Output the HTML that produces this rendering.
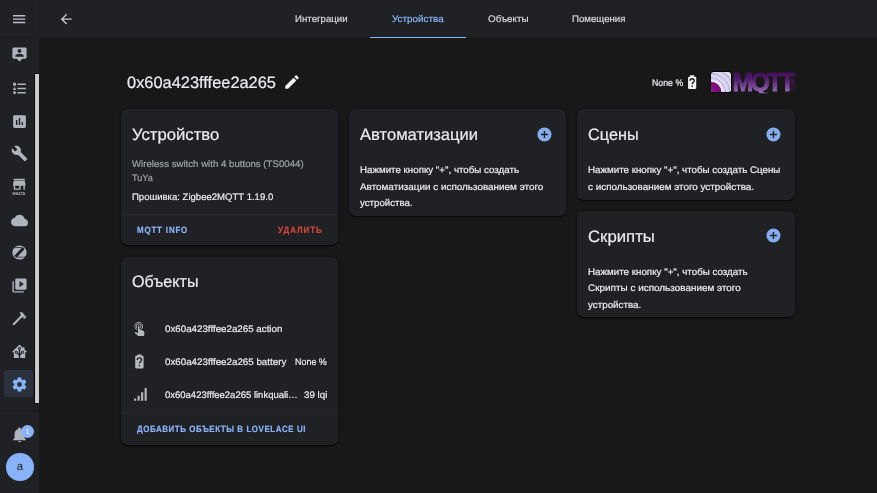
<!DOCTYPE html>
<html lang="ru">
<head>
<meta charset="utf-8">
<title>Home Assistant</title>
<style>
html,body{margin:0;padding:0;background:#181818;}
body{width:877px;height:493px;position:relative;overflow:hidden;font-family:"Liberation Sans", sans-serif;}
#app{position:absolute;left:0;top:0;width:877px;height:493px;will-change:transform;}
.t,.ic,.card,.ln,.hacs,#sel,#thumb,#thumb i,#uline,#badge,#avatar,#sidebar,#header,#main{position:absolute;}
.t{margin:0;padding:0;white-space:nowrap;line-height:1;font-weight:normal;transform-origin:0 50%;display:block;-webkit-text-stroke:0.22px currentColor;}
.btn{font-weight:bold;}
.ic{display:block;overflow:visible;}
#sidebar{left:0;top:0;width:38.6px;height:493px;background:#202124;}
#header{left:38.6px;top:0;width:838.4px;height:37.8px;background:#202124;}
#main{left:38.6px;top:37.8px;width:838.4px;height:455.2px;}
.card{background:#202124;border-radius:6.5px;box-shadow:0 1.4px 1px -1px rgba(0,0,0,.35),0 1px 1px rgba(0,0,0,.25),0 1px 2.5px rgba(0,0,0,.3),0 0 2.5px rgba(0,0,0,.3);}
.ln{height:1px;background:#26272A;}
.hacs{font-size:4.3px;font-weight:bold;color:#C9CDD3;line-height:1;letter-spacing:.15px;width:14px;text-align:center;transform:skewX(0.05deg);}
#sel{left:4.3px;top:370px;width:29px;height:26.8px;border-radius:3px;background:#2B313D;}
#thumb{left:33.9px;top:73.2px;width:5.6px;height:330.4px;background:#0C0C0E;}
#thumb i{left:0.8px;top:0.8px;right:0.8px;bottom:0.8px;background:linear-gradient(90deg,#B9B9B9,#D4D4D4 45%,#C2C2C2);}
#uline{top:36.6px;width:96.2px;height:1.9px;background:#89B3F8;}
#badge{left:21.1px;top:424.6px;width:13.2px;height:13.2px;border-radius:50%;background:#89B3F8;color:#F2F5FA;font-size:7.5px;line-height:13.2px;text-align:center;transform:skewX(0.05deg);}
#avatar{left:5.5px;top:452.9px;width:27.7px;height:27.7px;border-radius:50%;background:#89B3F8;color:#202124;font-size:11.5px;line-height:27.6px;text-align:center;transform:skewX(0.05deg);}
</style>
</head>
<body>
<div id="app">
<main id="main">
<h1 class="t" id="t4" style="left:88px;top:36.2px;font-size:16.5px;color:#E8EAED;transform:skewX(0.05deg) scaleX(0.9940)">0x60a423fffee2a265</h1>
<svg class="ic" style="left:244.6px;top:35.2px;width:18px;height:18px" viewBox="0 0 24 24"><path fill="#F0F1F3" d="M20.71,7.04C21.1,6.65 21.1,6 20.71,5.63L18.37,3.29C18,2.9 17.35,2.9 16.96,3.29L15.12,5.12L18.87,8.87M3,17.25V21H6.75L17.81,9.93L14.06,6.18L3,17.25Z"/></svg>
<span class="t" id="t5" style="left:613px;top:40.2px;font-size:9.5px;color:#E8EAED;transform:skewX(0.05deg) scaleX(0.9225)">None %</span>
<svg class="ic" style="left:645.35px;top:36.15px;width:16.3px;height:16.3px" viewBox="0 0 24 24"><path fill="#F0F1F3" d="M15.07,12.25L14.17,13.17C13.63,13.71 13.25,14.18 13.09,15H11.05C11.16,14.1 11.56,13.28 12.17,12.67L13.41,11.41C13.78,11.05 14,10.55 14,10C14,8.89 13.1,8 12,8A2,2 0 0,0 10,10H8A4,4 0 0,1 12,6A4,4 0 0,1 16,10C16,10.88 15.64,11.67 15.07,12.25M13,19H11V17H13M16.67,4H15V2H9V4H7.33C6.6,4 6,4.6 6,5.33V20.67C6,21.4 6.6,22 7.33,22H16.67C17.4,22 18,21.4 18,20.67V5.33C18,4.6 17.4,4 16.67,4Z"/></svg>
<svg class="ic" style="left:670.4px;top:32.2px;width:90px;height:26px" viewBox="0 0 90 26">
<defs>
<radialGradient id="gsq" gradientUnits="userSpaceOnUse" cx="2" cy="22.2" r="28">
<stop offset="0.37" stop-color="#F3F2FA"/><stop offset="0.41" stop-color="#ECEAF6"/>
<stop offset="0.505" stop-color="#C6C2E6"/><stop offset="0.52" stop-color="#9F9AD3"/><stop offset="0.535" stop-color="#E6E4F4"/>
<stop offset="0.665" stop-color="#C6C2E6"/><stop offset="0.68" stop-color="#9F9AD3"/><stop offset="0.695" stop-color="#E6E4F4"/>
<stop offset="0.825" stop-color="#C6C2E6"/><stop offset="0.84" stop-color="#9F9AD3"/><stop offset="0.855" stop-color="#E6E4F4"/>
<stop offset="1" stop-color="#CFCBEA"/>
</radialGradient>
<linearGradient id="gq" x1="0" y1="1" x2="1" y2="0"><stop offset="0" stop-color="#B455B4"/><stop offset="0.7" stop-color="#7C0C7C"/></linearGradient>
<linearGradient id="gt" gradientUnits="userSpaceOnUse" x1="0" y1="3" x2="0" y2="22"><stop offset="0" stop-color="#43105A"/><stop offset="0.3" stop-color="#4F1B68"/><stop offset="1" stop-color="#9566B4"/></linearGradient>
<clipPath id="ctx"><rect x="20" y="0" width="70" height="23.3"/></clipPath>
<clipPath id="csq"><rect x="2" y="2" width="20" height="20" rx="2.6"/></clipPath>
</defs>
<rect x="1.1" y="1.1" width="21.8" height="21.8" rx="3.4" fill="#060608"/>
<rect x="2" y="2" width="20" height="20" rx="2.6" fill="url(#gsq)"/>
<g clip-path="url(#csq)">
<circle cx="2" cy="22.2" r="10.4" fill="url(#gq)"/>
</g>
<text clip-path="url(#ctx)" x="23.6" y="20.9" font-family="Liberation Sans, sans-serif" font-weight="bold" font-size="25" fill="url(#gt)" stroke="url(#gt)" stroke-width="0.9" textLength="62.4" lengthAdjust="spacing">MQTT</text>
<text transform="translate(82,5.8) rotate(90)" font-family="Liberation Sans, sans-serif" font-weight="bold" font-size="5" fill="#4A1761" textLength="14.6" lengthAdjust="spacingAndGlyphs">.ORG</text>
</svg>
<section class="card" style="left:82.1px;top:71.6px;width:217.3px;height:135.9px;">
<h2 class="t" id="t6" style="left:11.3px;top:16.6px;font-size:16.5px;color:#E8EAED;transform:skewX(0.05deg) scaleX(1.0111)">Устройство</h2>
<span class="t" id="t7" style="left:11.3px;top:49.6px;font-size:9.5px;color:#9BA0A6;transform:skewX(0.05deg) scaleX(1.0156)">Wireless switch with 4 buttons (TS0044)</span>
<span class="t" id="t8" style="left:11.3px;top:63.6px;font-size:9.5px;color:#9BA0A6;transform:skewX(0.05deg) scaleX(0.9601)">TuYa</span>
<span class="t" id="t9" style="left:11.3px;top:82.6px;font-size:9.5px;color:#E8EAED;transform:skewX(0.05deg) scaleX(1.0055)">Прошивка: Zigbee2MQTT 1.19.0</span>
<div class="ln" style="left:0;top:104.3px;width:217.3px"></div>
<span class="t btn" id="t10" style="left:16.5px;top:116.6px;font-size:9px;color:#89B3F8;letter-spacing:0.956px;transform:skewX(0.05deg) scaleX(0.88)">MQTT INFO</span>
<span class="t btn" id="t11" style="left:157px;top:116.6px;font-size:9px;color:#D0453A;letter-spacing:1.140px;transform:skewX(0.05deg) scaleX(0.88)">УДАЛИТЬ</span>
</section>
<section class="card" style="left:310.5px;top:71.6px;width:217.3px;height:106.7px;">
<h2 class="t" id="t12" style="left:11.3px;top:16.6px;font-size:16.5px;color:#E8EAED;transform:skewX(0.05deg) scaleX(1.0048)">Автоматизации</h2>
<svg class="ic" style="left:187.05px;top:16.35px;width:16.9px;height:16.9px" viewBox="0 0 24 24"><path fill="#85ACEC" d="M17,13H13V17H11V13H7V11H11V7H13V11H17M12,2A10,10 0 0,0 2,12A10,10 0 0,0 12,22A10,10 0 0,0 22,12A10,10 0 0,0 12,2Z"/></svg>
<span class="t" id="t13" style="left:11.3px;top:55.6px;font-size:9.5px;color:#E8EAED;transform:skewX(0.05deg) scaleX(1.0254)">Нажмите кнопку "+", чтобы создать</span>
<span class="t" id="t14" style="left:11.3px;top:72.6px;font-size:9.5px;color:#E8EAED;transform:skewX(0.05deg) scaleX(1.0418)">Автоматизации с использованием этого</span>
<span class="t" id="t15" style="left:11.3px;top:88.6px;font-size:9.5px;color:#E8EAED;transform:skewX(0.05deg) scaleX(1.0193)">устройства.</span>
</section>
<section class="card" style="left:538.9px;top:71.6px;width:217.6px;height:90.2px;">
<h2 class="t" id="t16" style="left:10.6px;top:16.6px;font-size:16.5px;color:#E8EAED;transform:skewX(0.05deg) scaleX(0.9872)">Сцены</h2>
<svg class="ic" style="left:187.05px;top:16.35px;width:16.9px;height:16.9px" viewBox="0 0 24 24"><path fill="#85ACEC" d="M17,13H13V17H11V13H7V11H11V7H13V11H17M12,2A10,10 0 0,0 2,12A10,10 0 0,0 12,22A10,10 0 0,0 22,12A10,10 0 0,0 12,2Z"/></svg>
<span class="t" id="t17" style="left:10.6px;top:55.6px;font-size:9.5px;color:#E8EAED;transform:skewX(0.05deg) scaleX(1.0275)">Нажмите кнопку "+", чтобы создать Сцены</span>
<span class="t" id="t18" style="left:10.6px;top:72.6px;font-size:9.5px;color:#E8EAED;transform:skewX(0.05deg) scaleX(1.0390)">с использованием этого устройства.</span>
</section>
<section class="card" style="left:538.9px;top:173.2px;width:217.6px;height:106.4px;">
<h2 class="t" id="t19" style="left:10.6px;top:17px;font-size:16.5px;color:#E8EAED;transform:skewX(0.05deg) scaleX(1.0151)">Скрипты</h2>
<svg class="ic" style="left:187.05px;top:16.25px;width:16.9px;height:16.9px" viewBox="0 0 24 24"><path fill="#85ACEC" d="M17,13H13V17H11V13H7V11H11V7H13V11H17M12,2A10,10 0 0,0 2,12A10,10 0 0,0 12,22A10,10 0 0,0 22,12A10,10 0 0,0 12,2Z"/></svg>
<span class="t" id="t20" style="left:10.6px;top:56px;font-size:9.5px;color:#E8EAED;transform:skewX(0.05deg) scaleX(1.0293)">Нажмите кнопку "+", чтобы создать</span>
<span class="t" id="t21" style="left:10.6px;top:72px;font-size:9.5px;color:#E8EAED;transform:skewX(0.05deg) scaleX(1.0451)">Скрипты с использованием этого</span>
<span class="t" id="t22" style="left:10.6px;top:89px;font-size:9.5px;color:#E8EAED;transform:skewX(0.05deg) scaleX(1.0329)">устройства.</span>
</section>
<section class="card" style="left:82.1px;top:219.5px;width:217.3px;height:187.3px;">
<h2 class="t" id="t23" style="left:11.3px;top:15.7px;font-size:16.5px;color:#E8EAED;transform:skewX(0.05deg) scaleX(0.9771)">Объекты</h2>
<svg class="ic" style="left:10.3px;top:63px;width:16.8px;height:16.8px" viewBox="0 0 24 24"><path fill="#B6B9BE" d="M10,9A1,1 0 0,1 11,8A1,1 0 0,1 12,9V13.47L13.21,13.6L18.15,15.79C18.68,16.03 19,16.56 19,17.14V21.5C18.97,22.32 18.32,22.97 17.5,23H11C10.62,23 10.26,22.85 10,22.57L5.1,18.37L5.84,17.6C6.03,17.39 6.3,17.28 6.58,17.28H6.8L10,19V9M11,5A4,4 0 0,1 15,9C15,10.5 14.2,11.77 13,12.46V11.24C13.61,10.69 14,9.89 14,9A3,3 0 0,0 11,6A3,3 0 0,0 8,9C8,9.89 8.39,10.69 9,11.24V12.46C7.8,11.77 7,10.5 7,9A4,4 0 0,1 11,5M11,3A6,6 0 0,1 17,9C17,10.7 16.29,12.23 15.16,13.33L14.16,12.88C15.28,11.96 16,10.56 16,9A5,5 0 0,0 11,4A5,5 0 0,0 6,9C6,11.05 7.23,12.81 9,13.58V14.66C6.67,13.83 5,11.61 5,9A6,6 0 0,1 11,3Z"/></svg>
<span class="t" id="t24" style="left:44.1px;top:66.7px;font-size:9.5px;color:#E8EAED;transform:skewX(0.05deg) scaleX(1.0271)">0x60a423fffee2a265 action</span>
<svg class="ic" style="left:10.6px;top:96.1px;width:16.8px;height:16.8px" viewBox="0 0 24 24"><path fill="#B6B9BE" d="M15.07,12.25L14.17,13.17C13.63,13.71 13.25,14.18 13.09,15H11.05C11.16,14.1 11.56,13.28 12.17,12.67L13.41,11.41C13.78,11.05 14,10.55 14,10C14,8.89 13.1,8 12,8A2,2 0 0,0 10,10H8A4,4 0 0,1 12,6A4,4 0 0,1 16,10C16,10.88 15.64,11.67 15.07,12.25M13,19H11V17H13M16.67,4H15V2H9V4H7.33C6.6,4 6,4.6 6,5.33V20.67C6,21.4 6.6,22 7.33,22H16.67C17.4,22 18,21.4 18,20.67V5.33C18,4.6 17.4,4 16.67,4Z"/></svg>
<span class="t" id="t25" style="left:44.1px;top:99.7px;font-size:9.5px;color:#E8EAED;transform:skewX(0.05deg) scaleX(1.0280)">0x60a423fffee2a265 battery</span>
<span class="t" id="t26" style="left:174.5px;top:99.7px;font-size:9.5px;color:#E8EAED;transform:skewX(0.05deg) scaleX(0.9402)">None %</span>
<svg class="ic" style="left:10.9px;top:128.8px;width:16.8px;height:16.8px" viewBox="0 0 24 24"><path fill="#B6B9BE" d="M3,21H6V18H3M8,21H11V14H8M13,21H16V9H13M18,21H21V3H18V21Z"/></svg>
<span class="t" id="t27" style="left:44.1px;top:132.7px;font-size:9.5px;color:#E8EAED;transform:skewX(0.05deg) scaleX(0.9994)">0x60a423fffee2a265 linkquali…</span>
<span class="t" id="t28" style="left:182.9px;top:132.7px;font-size:9.5px;color:#E8EAED;transform:skewX(0.05deg) scaleX(1.0296)">39 lqi</span>
<div class="ln" style="left:0;top:155px;width:217.3px"></div>
<span class="t btn" id="t29" style="left:16.5px;top:167.7px;font-size:9px;color:#89B3F8;letter-spacing:0.651px;transform:skewX(0.05deg) scaleX(0.88)">ДОБАВИТЬ ОБЪЕКТЫ В LOVELACE UI</span>
</section>
</main>
<header id="header">
<svg class="ic" style="left:19.05px;top:11.15px;width:16.3px;height:16.3px" viewBox="0 0 24 24"><path fill="#C3C7CE" d="M20,11V13H8L13.5,18.5L12.08,19.92L4.16,12L12.08,4.08L13.5,5.5L8,11H20Z"/></svg>
<span class="t tab" id="t0" style="left:256.5px;top:14px;font-size:9.5px;color:#D3D5D9;transform:skewX(0.05deg) scaleX(1.0191)">Интеграции</span>
<span class="t tab" id="t1" style="left:353.6px;top:14px;font-size:9.5px;color:#89B3F8;transform:skewX(0.05deg) scaleX(1.0400)">Устройства</span>
<span class="t tab" id="t2" style="left:449px;top:14px;font-size:9.5px;color:#D3D5D9;transform:skewX(0.05deg) scaleX(1.0358)">Объекты</span>
<span class="t tab" id="t3" style="left:533.5px;top:14px;font-size:9.5px;color:#D3D5D9;transform:skewX(0.05deg) scaleX(1.0165)">Помещения</span>
<div id="uline" style="left:331.4px"></div>
</header>
<nav id="sidebar">
<div class="ln" style="left:0;top:37.4px;width:38.6px;background:#1B1C1F"></div>
<div class="ln" style="left:38px;top:0;width:0.8px;height:37.8px;background:#1C1D20"></div>
<div id="sel"></div>
<svg class="ic" style="left:11.15px;top:11.05px;width:16.3px;height:16.3px" viewBox="0 0 24 24"><path fill="#BCC0C8" d="M3,6H21V8H3V6M3,11H21V13H3V11M3,16H21V18H3V16Z"/></svg>
<svg class="ic" style="left:10.8px;top:46.4px;width:17px;height:17px" viewBox="0 0 24 24"><path fill="#AEB3BC" d="M20,2H4A2,2 0 0,0 2,4V16A2,2 0 0,0 4,18H8L12,22L16,18H20A2,2 0 0,0 22,16V4A2,2 0 0,0 20,2M12,4.3C13.5,4.3 14.7,5.5 14.7,7C14.7,8.5 13.5,9.7 12,9.7C10.5,9.7 9.3,8.5 9.3,7C9.3,5.5 10.5,4.3 12,4.3M18,15H6V14.1C6,12.1 10,11 12,11C14,11 18,12.1 18,14.1V15Z"/></svg>
<svg class="ic" style="left:10.8px;top:79.6px;width:17px;height:17px" viewBox="0 0 24 24"><path fill="#AEB3BC" d="M5,9.5L7.5,14H2.5L5,9.5M3,4H7V8H3V4M5,20A2,2 0 0,0 7,18A2,2 0 0,0 5,16A2,2 0 0,0 3,18A2,2 0 0,0 5,20M9,5V7H21V5H9M9,19H21V17H9V19M9,13H21V11H9V13Z"/></svg>
<svg class="ic" style="left:10.8px;top:112.7px;width:17px;height:17px" viewBox="0 0 24 24"><path fill="#AEB3BC" d="M17,17H15V13H17M13,17H11V7H13M9,17H7V10H9M19,3H5C3.89,3 3,3.89 3,5V19A2,2 0 0,0 5,21H19A2,2 0 0,0 21,19V5C21,3.89 20.1,3 19,3Z"/></svg>
<svg class="ic" style="left:10.8px;top:145.2px;width:17px;height:17px" viewBox="0 0 24 24"><path fill="#AEB3BC" d="M22.7,19L13.6,9.9C14.5,7.6 14,4.9 12.1,3C10.1,1 7.1,0.6 4.7,1.7L9,6L6,9L1.6,4.7C0.4,7.1 0.9,10.1 2.9,12.1C4.8,14 7.5,14.5 9.8,13.6L18.9,22.7C19.3,23.1 19.9,23.1 20.3,22.7L22.6,20.4C23.1,20 23.1,19.3 22.7,19Z"/></svg>
<svg class="ic" style="left:11.15px;top:176.4px;width:16.6px;height:16.6px" viewBox="0 0 24 24"><path fill="#AEB3BC" d="M12,18H6V14H12M21,14V12L20,7H4L3,12V14H4V20H14V14H18V20H20V14M20,4H4V6H20V4Z"/></svg>
<span class="hacs" style="left:12.45px;top:192px">HACS</span>
<svg class="ic" style="left:10.8px;top:211.8px;width:17px;height:17px" viewBox="0 0 24 24"><path fill="#AEB3BC" d="M19.35,10.03C18.67,6.59 15.64,4 12,4C9.11,4 6.6,5.64 5.35,8.03C2.34,8.36 0,10.9 0,14A6,6 0 0,0 6,20H19A5,5 0 0,0 24,15C24,12.36 21.95,10.22 19.35,10.03Z"/></svg>
<svg class="ic" style="left:10.8px;top:244.1px;width:17px;height:17px" viewBox="0 0 24 24"><path fill="#AEB3BC" d="M4.06,6.15C3.97,6.17 3.88,6.22 3.8,6.28C2.66,7.9 2,9.87 2,12A10,10 0 0,0 12,22C15,22 17.68,20.68 19.5,18.6L17,18.85C14.25,19.15 11.45,19.19 8.66,18.96C7.95,18.94 7.24,18.76 6.59,18.45C5.73,18.06 5.15,17.23 5.07,16.29C5.06,16.13 5.12,16 5.23,15.87L7.42,13.6L15.03,5.7V5.6H10.84C8.57,5.64 6.31,5.82 4.06,6.15M20.17,17.5C20.26,17.47 20.35,17.44 20.43,17.39C21.42,15.83 22,14 22,12A10,10 0 0,0 12,2C9.22,2 6.7,3.13 4.89,4.97H5.17C8.28,4.57 11.43,4.47 14.56,4.65C15.5,4.64 16.45,4.82 17.33,5.17C18.25,5.53 18.89,6.38 19,7.37C19,7.53 18.93,7.7 18.82,7.82L9.71,17.19L9,17.95V18.06H13.14C15.5,18 17.84,17.81 20.17,17.5Z"/></svg>
<svg class="ic" style="left:10.8px;top:277.1px;width:17px;height:17px" viewBox="0 0 24 24"><path fill="#AEB3BC" d="M4,6H2V20A2,2 0 0,0 4,22H18V20H4V6M20,2H8A2,2 0 0,0 6,4V16A2,2 0 0,0 8,18H20A2,2 0 0,0 22,16V4A2,2 0 0,0 20,2M12,14.5V5.5L18,10L12,14.5Z"/></svg>
<svg class="ic" style="left:10.8px;top:310px;width:17px;height:17px" viewBox="0 0 24 24"><path fill="#AEB3BC" d="M2,19.63L13.43,8.2L12.72,7.5L14.14,6.07L12,3.89C13.2,2.7 15.09,2.7 16.27,3.89L19.87,7.5L18.45,8.91H21.29L22,9.62L18.45,13.21L17.74,12.5V9.62L16.27,11.04L15.56,10.33L4.13,21.76L2,19.63Z"/></svg>
<svg class="ic" style="left:10.8px;top:343px;width:17px;height:17px" viewBox="0 0 24 24"><path fill="#AEB3BC" d="M21.8,13H20V21H13V17.67L15.79,14.88L16.5,15C17.66,15 18.6,14.06 18.6,12.9C18.6,11.74 17.66,10.8 16.5,10.8A2.1,2.1 0 0,0 14.4,12.9L14.5,13.61L13,15.13V9.65C13.66,9.29 14.1,8.6 14.1,7.8A2.1,2.1 0 0,0 12,5.7A2.1,2.1 0 0,0 9.9,7.8C9.9,8.6 10.34,9.29 11,9.65V15.13L9.5,13.61L9.6,12.9A2.1,2.1 0 0,0 7.5,10.8A2.1,2.1 0 0,0 5.4,12.9A2.1,2.1 0 0,0 7.5,15L8.21,14.88L11,17.67V21H4V13H2.25C1.83,13 1.42,13 1.42,12.79C1.43,12.57 1.85,12.15 2.28,11.72L11,3C11.33,2.67 11.67,2.33 12,2.33C12.33,2.33 12.67,2.67 13,3L17,7V6H19V9L21.78,11.78C22.18,12.18 22.59,12.59 22.6,12.8C22.6,13 22.2,13 21.8,13M7.5,12A0.9,0.9 0 0,1 8.4,12.9A0.9,0.9 0 0,1 7.5,13.8A0.9,0.9 0 0,1 6.6,12.9A0.9,0.9 0 0,1 7.5,12M16.5,12C17,12 17.4,12.4 17.4,12.9C17.4,13.4 17,13.8 16.5,13.8A0.9,0.9 0 0,1 15.6,12.9A0.9,0.9 0 0,1 16.5,12M12,6.9C12.5,6.9 12.9,7.3 12.9,7.8C12.9,8.3 12.5,8.7 12,8.7C11.5,8.7 11.1,8.3 11.1,7.8C11.1,7.3 11.5,6.9 12,6.9Z"/></svg>
<svg class="ic" style="left:10.8px;top:375.7px;width:17px;height:17px" viewBox="0 0 24 24"><path fill="#89B3F8" d="M12,15.5A3.5,3.5 0 0,1 8.5,12A3.5,3.5 0 0,1 12,8.5A3.5,3.5 0 0,1 15.5,12A3.5,3.5 0 0,1 12,15.5M19.43,12.97C19.47,12.65 19.5,12.33 19.5,12C19.5,11.67 19.47,11.34 19.43,11L21.54,9.37C21.73,9.22 21.78,8.95 21.66,8.73L19.66,5.27C19.54,5.05 19.27,4.96 19.05,5.05L16.56,6.05C16.04,5.66 15.5,5.32 14.87,5.07L14.5,2.42C14.46,2.18 14.25,2 14,2H10C9.75,2 9.54,2.18 9.5,2.42L9.13,5.07C8.5,5.32 7.96,5.66 7.44,6.05L4.95,5.05C4.73,4.96 4.46,5.05 4.34,5.27L2.34,8.73C2.21,8.95 2.27,9.22 2.46,9.37L4.57,11C4.53,11.34 4.5,11.67 4.5,12C4.5,12.33 4.53,12.65 4.57,12.97L2.46,14.63C2.27,14.78 2.21,15.05 2.34,15.27L4.34,18.73C4.46,18.95 4.73,19.03 4.95,18.95L7.44,17.94C7.96,18.34 8.5,18.68 9.13,18.93L9.5,21.58C9.54,21.82 9.75,22 10,22H14C14.25,22 14.46,21.82 14.5,21.58L14.87,18.93C15.5,18.67 16.04,18.34 16.56,17.94L19.05,18.95C19.27,19.03 19.54,18.95 19.66,18.73L21.66,15.27C21.78,15.05 21.73,14.78 21.54,14.63L19.43,12.97Z"/></svg>
<div id="thumb"><i></i></div>
<div class="ln" style="left:0;top:409.6px;width:38.6px;background:#18191B"></div>
<svg class="ic" style="left:10.8px;top:425.7px;width:17px;height:17px" viewBox="0 0 24 24"><path fill="#AEB3BC" d="M21,19V20H3V19L5,17V11C5,7.9 7.03,5.17 10,4.29C10,4.19 10,4.1 10,4A2,2 0 0,1 12,2A2,2 0 0,1 14,4C14,4.1 14,4.19 14,4.29C16.97,5.17 19,7.9 19,11V17L21,19M14,21A2,2 0 0,1 12,23A2,2 0 0,1 10,21"/></svg>
<div id="badge">1</div>
<div id="avatar">a</div>
</nav>
</div>
</body>
</html>
